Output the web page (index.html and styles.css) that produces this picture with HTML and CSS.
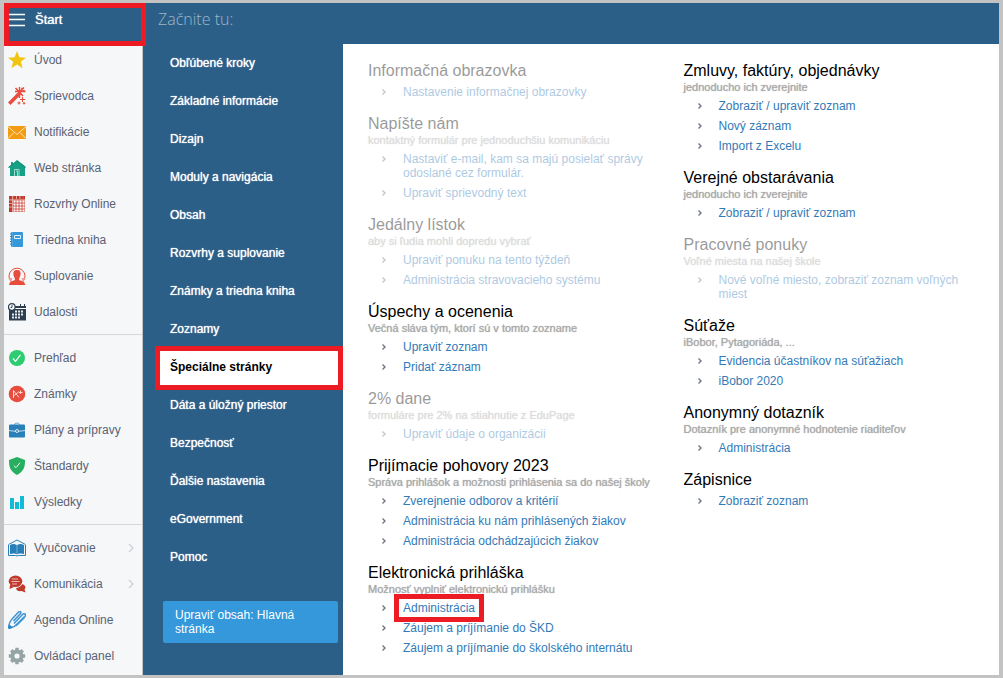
FILE: index.html
```
<!DOCTYPE html>
<html lang="sk">

<head>
	<title>EduPage</title>
	<meta charset="utf-8">
	<meta name="viewport" content="width=device-width, initial-scale=1">
	<link rel="stylesheet" href="styles.css">
</head>

<body>
	<svg class="sprite" aria-hidden="true">
		<symbol id="arrow" viewBox="0 0 6 8"><path d="M1.500 1.500L4 4 1.500 6.500" fill="none" stroke="#6d7687" stroke-width="1.400"/></symbol>
		<symbol id="more" viewBox="0 0 6 10"><path d="M1 1l4 4-4 4" fill="none" stroke="#cdd0d3" stroke-width="1.200"/></symbol>
	</svg>
	<div class="page">
		<nav class="sidebar">
			<button class="start" type="button">
				<svg class="icon" viewBox="0 0 18 18"><path d="M1 3.500h16M1 8.500h16M1 14.500h16" stroke="#fff" stroke-width="1.500"/></svg>
				<span>Štart</span>
			</button>
			<ul class="side-list">
				<li><a href="#">
					<svg class="icon" viewBox="0 0 18 18"><path d="M9 0l2.400 6.300 6.600.400-5.200 4 1.800 6.500L9 13.500l-5.600 3.700 1.800-6.500L0 6.700l6.600-.400z" fill="#f1c40f"/></svg>
					<span>Úvod</span></a></li>
				<li><a href="#">
					<svg class="icon" viewBox="0 0 18 18"><path d="M0 15.500L9.500 6l2.400 2.400L2.500 18z" fill="#e74c3c"/><path d="M11.500 0v11M7 4.500h10.500M7.500 1l7.500 8M16 .500L8 8.500M13.500 1l3 3" stroke="#e74c3c" stroke-width="1.500"/><path d="M14.500 10v5M12 12.500h5M11 14.500v3M9.500 16h3M16 15v2.500M14.800 16.300h2.500" stroke="#e74c3c"/></svg>
					<span>Sprievodca</span></a></li>
				<li><a href="#">
					<svg class="icon" viewBox="0 0 18 18"><path d="M0 3h18v13H0z" fill="#f39c12"/><path d="M0 3.500l9 8 9-8M0 15.500l6-6M18 15.500l-6-6" fill="none" stroke="#fbe3bb"/></svg>
					<span>Notifikácie</span></a></li>
				<li><a href="#">
					<svg class="icon" viewBox="0 0 18 18"><path d="M3 3h2v2L9 1l8.500 6.500-.5 1.500V17H2V9L.5 8 3 6z" fill="#16a085"/><path d="M.5 8.500L9 2l8.500 6.500" fill="none" stroke="#138b75"/><path d="M6.500 17v-6.500h4.500V17M8 12h1.500v5" fill="none" stroke="#a4d9cf"/></svg>
					<span>Web stránka</span></a></li>
				<li><a href="#">
					<svg class="icon" viewBox="0 0 18 18"><path d="M1 1h16v16H1z" fill="#cf5c53"/><path d="M5.500 5.500h2v2h-2zM8.500 5.500h2v2h-2zM11.500 5.500h2v2h-2zM14.500 5.500h2v2h-2zM5.500 8.500h2v2h-2zM8.500 8.500h2v2h-2zM11.500 8.500h2v2h-2zM14.500 8.500h2v2h-2zM5.500 11.500h2v2h-2zM8.500 11.500h2v2h-2zM11.500 11.500h2v2h-2zM14.500 11.500h2v2h-2zM5.500 14.500h2v2h-2zM8.500 14.500h2v2h-2zM11.500 14.500h2v2h-2zM14.500 14.500h2v2h-2z" fill="#fff"/><path d="M1 1h3v3H1zM5.500 1h2.500v3H5.500zM9 1h2.500v3H9zM12.500 1h2v3h-2zM15.500 1H17v3h-1.500zM1 5.500h3V8H1zM1 9h3v2.500H1zM1 12.500h3V17H1z" fill="#c0392b"/><path d="M4.500 1v16M8.500 1v3M12 1v3M1 5h16M1 8.500h3M1 12h3" stroke="#f3d0cd" stroke-width=".6"/></svg>
					<span>Rozvrhy Online</span></a></li>
				<li><a href="#">
					<svg class="icon" viewBox="0 0 18 18"><rect x="3" y="1" width="12" height="15" rx="1" fill="#3498db"/><path d="M2 3h2M2 5.500h2M2 8h2M2 10.500h2M2 13h2" stroke="#2980b9"/><path d="M6.500 4.500h6v3h-6z" fill="#3498db" stroke="#e6f2fb"/><path d="M4.500 1v15" stroke="#6db5e6" stroke-width=".5"/></svg>
					<span>Triedna kniha</span></a></li>
				<li><a href="#">
					<svg class="icon" viewBox="0 0 18 18"><path d="M3 14.500A8 8 0 1 1 15 14.500" fill="none" stroke="#e74c3c"/><path d="M.5 11l2.700 4 1.300-4zM17.500 11l-2.700 4-1.300-4z" fill="#f1a097"/><path d="M9 3c3 0 4 2 3.500 5-.4 2-1.500 3-1.500 5l5 2 1.500 3H1l1-3 5-2c0-2-1.200-3-1.500-5C5 5 6 3 9 3z" fill="#e74c3c"/></svg>
					<span>Suplovanie</span></a></li>
				<li><a href="#">
					<svg class="icon" viewBox="0 0 18 18"><path d="M1 3h17v14.500H1z" fill="#2c3e50"/><path d="M6 5.500h12" stroke="#fff"/><path d="M12.500 1v3M16.500 1v3" stroke="#2c3e50"/><circle cx="3.800" cy="4" r="3.300" fill="#fff" stroke="#2c3e50" stroke-width="1.200"/><path d="M4 2v2.500H2.500" fill="none" stroke="#2c3e50"/><path d="M7 7.500h2v2H7zM10 7.500h2v2h-2zM13 7.500h2v2h-2zM4 10.500h2v2H4zM7 10.500h2v2H7zM10 10.500h2v2h-2zM13 10.500h2v2h-2zM4 13.500h2v2H4zM7 13.500h2v2H7zM10 13.500h2v2h-2z" fill="#e8ebee"/></svg>
					<span>Udalosti</span></a></li>
			</ul>
			<ul class="side-list">
				<li><a href="#">
					<svg class="icon" viewBox="0 0 18 18"><circle cx="9" cy="9" r="8" fill="#2ecc71"/><path d="M5 9.500l2.500 2.800 5-6.500" fill="none" stroke="#fff" stroke-width="1.200"/></svg>
					<span>Prehľad</span></a></li>
				<li><a href="#">
					<svg class="icon" viewBox="0 0 18 18"><circle cx="9" cy="9" r="8.300" fill="#e74c3c"/><path d="M5.500 13V5.500L11 12.500M5.500 11L11 6.500M11 7.500h3.500M12.500 5.500v3.500" fill="none" stroke="#fbdad6"/></svg>
					<span>Známky</span></a></li>
				<li><a href="#">
					<svg class="icon" viewBox="0 0 18 18"><path d="M6.500 4q0-2 2.500-2t2.500 2" fill="none" stroke="#6ba8d1"/><rect x="1" y="3.500" width="16" height="13" rx="1" fill="#2980b9"/><path d="M1 9.500c5 1 11 1 16 0" fill="none" stroke="#eaf3f9" stroke-width=".8"/><circle cx="9" cy="10" r="1.500" fill="#2980b9" stroke="#fff" stroke-width=".8"/></svg>
					<span>Plány a prípravy</span></a></li>
				<li><a href="#">
					<svg class="icon" viewBox="0 0 18 18"><path d="M9 0l8 3c0 7-1 11-8 15C2 14 1 10 1 3z" fill="#27ae60"/><path d="M5.800 8.500l2.200 2.200 4-5" fill="none" stroke="#e9f7ef"/></svg>
					<span>Štandardy</span></a></li>
				<li><a href="#">
					<svg class="icon" viewBox="0 0 18 18"><path d="M2 5h4v11H2zM7 9h4v7H7zM12 3h4v13h-4z" fill="#13bcd6"/></svg>
					<span>Výsledky</span></a></li>
			</ul>
			<ul class="side-list">
				<li><a href="#">
					<svg class="icon" viewBox="0 0 18 18"><path d="M.5 5.500L9 1l8.500 4.500" fill="none" stroke="#2980b9"/><path d="M2 6c3-1.500 5.500-1 7 .5 1.500-1.500 4-2 7-.5v9c-3-1-5.500-.5-7 .5-1.500-1-4-1.500-7-.5z" fill="#2980b9"/><path d="M.5 6v10.500h6.800q1.700 1 3.400 0h6.800V6" fill="none" stroke="#2980b9"/><path d="M9 6.500v8.500" stroke="#9cc6e2" stroke-width=".7"/></svg>
					<span>Vyučovanie</span><svg class="more"><use href="#more"/></svg></a></li>
				<li><a href="#">
					<svg class="icon" viewBox="0 0 18 18"><path d="M13 9c4 0 5.500 3.500 3.500 5.500l1 3-4-1.500c-3 .5-5-.5-5.500-2.500z" fill="#c0392b"/><ellipse cx="7.500" cy="6.500" rx="7.500" ry="6.300" fill="#f5f7f9"/><ellipse cx="7.500" cy="6.300" rx="6.800" ry="5.800" fill="#c0392b"/><path d="M2 10l-.5 4L6 12z" fill="#c0392b"/><path d="M4 4h6M3.500 6.500h8M4 9h5" stroke="#f0c8c4" stroke-width=".9"/></svg>
					<span>Komunikácia</span><svg class="more"><use href="#more"/></svg></a></li>
				<li><a href="#">
					<svg class="icon" viewBox="0 0 18 18"><path d="M.5 17.500c0-5 1-7 4-10L10.500 1c2-1 3 0 2 1.500L5.500 10M.5 17.500c4-.5 6-1.500 9-4.500L17 5.500C18.500 3 16 2 14.500 3.500L6 12.500" fill="none" stroke="#3f93d3" stroke-width="1.500"/><path d="M8 14.500L16.500 6" stroke="#3498db" stroke-width="2"/><path d="M.5 17.500l1-4 3 3z" fill="#2980b9"/></svg>
					<span>Agenda Online</span></a></li>
				<li><a href="#">
					<svg class="icon" viewBox="0 0 18 18"><circle cx="9" cy="9" r="4.600" fill="none" stroke="#95a5a6" stroke-width="4"/><path d="M9 .8v3M9 14.200v3M.8 9h3M14.200 9h3M3.200 3.200l2 2M12.800 12.800l2 2M3.200 14.800l2-2M12.800 5.200l2-2" stroke="#95a5a6" stroke-width="3.400"/></svg>
					<span>Ovládací panel</span></a></li>
			</ul>
		</nav>

		<div class="main">
			<header class="top">Začnite tu:</header>
			<div class="columns">
				<nav class="menu">
					<ul>
						<li><a href="#">Obľúbené kroky</a></li>
						<li><a href="#">Základné informácie</a></li>
						<li><a href="#">Dizajn</a></li>
						<li><a href="#">Moduly a navigácia</a></li>
						<li><a href="#">Obsah</a></li>
						<li><a href="#">Rozvrhy a suplovanie</a></li>
						<li><a href="#">Známky a triedna kniha</a></li>
						<li><a href="#">Zoznamy</a></li>
						<li><a href="#" class="active">Špeciálne stránky</a></li>
						<li><a href="#">Dáta a úložný priestor</a></li>
						<li><a href="#">Bezpečnosť</a></li>
						<li><a href="#">Ďalšie nastavenia</a></li>
						<li><a href="#">eGovernment</a></li>
						<li><a href="#">Pomoc</a></li>
					</ul>
					<button class="edit" type="button">Upraviť obsah: Hlavná stránka</button>
				</nav>

				<main class="content">
					<div class="col">
						<section class="off">
							<h2>Informačná obrazovka</h2>
							<ul>
								<li><svg class="arrow"><use href="#arrow"/></svg><a href="#">Nastavenie informačnej obrazovky</a></li>
							</ul>
						</section>
						<section class="off">
							<h2>Napíšte nám</h2>
							<p>kontaktný formulár pre jednoduchšiu komunikáciu</p>
							<ul>
								<li><svg class="arrow"><use href="#arrow"/></svg><a href="#">Nastaviť e-mail, kam sa majú posielať správy odoslané cez formulár.</a></li>
								<li><svg class="arrow"><use href="#arrow"/></svg><a href="#">Upraviť sprievodný text</a></li>
							</ul>
						</section>
						<section class="off">
							<h2>Jedálny lístok</h2>
							<p>aby si ľudia mohli dopredu vybrať</p>
							<ul>
								<li><svg class="arrow"><use href="#arrow"/></svg><a href="#">Upraviť ponuku na tento týždeň</a></li>
								<li><svg class="arrow"><use href="#arrow"/></svg><a href="#">Administrácia stravovacieho systému</a></li>
							</ul>
						</section>
						<section>
							<h2>Úspechy a ocenenia</h2>
							<p>Večná sláva tým, ktorí sú v tomto zozname</p>
							<ul>
								<li><svg class="arrow"><use href="#arrow"/></svg><a href="#">Upraviť zoznam</a></li>
								<li><svg class="arrow"><use href="#arrow"/></svg><a href="#">Pridať záznam</a></li>
							</ul>
						</section>
						<section class="off">
							<h2>2% dane</h2>
							<p>formuláre pre 2% na stiahnutie z EduPage</p>
							<ul>
								<li><svg class="arrow"><use href="#arrow"/></svg><a href="#">Upraviť údaje o organizácii</a></li>
							</ul>
						</section>
						<section>
							<h2>Prijímacie pohovory 2023</h2>
							<p>Správa prihlášok a možnosti prihlásenia sa do našej školy</p>
							<ul>
								<li><svg class="arrow"><use href="#arrow"/></svg><a href="#">Zverejnenie odborov a kritérií</a></li>
								<li><svg class="arrow"><use href="#arrow"/></svg><a href="#">Administrácia ku nám prihlásených žiakov</a></li>
								<li><svg class="arrow"><use href="#arrow"/></svg><a href="#">Administrácia odchádzajúcich žiakov</a></li>
							</ul>
						</section>
						<section>
							<h2>Elektronická prihláška</h2>
							<p>Možnosť vyplniť elektronickú prihlášku</p>
							<ul>
								<li><svg class="arrow"><use href="#arrow"/></svg><a href="#" class="marked">Administrácia</a></li>
								<li><svg class="arrow"><use href="#arrow"/></svg><a href="#">Záujem a príjímanie do ŠKD</a></li>
								<li><svg class="arrow"><use href="#arrow"/></svg><a href="#">Záujem a príjímanie do školského internátu</a></li>
							</ul>
						</section>
					</div>
					<div class="col">
						<section>
							<h2>Zmluvy, faktúry, objednávky</h2>
							<p>jednoducho ich zverejnite</p>
							<ul>
								<li><svg class="arrow"><use href="#arrow"/></svg><a href="#">Zobraziť / upraviť zoznam</a></li>
								<li><svg class="arrow"><use href="#arrow"/></svg><a href="#">Nový záznam</a></li>
								<li><svg class="arrow"><use href="#arrow"/></svg><a href="#">Import z Excelu</a></li>
							</ul>
						</section>
						<section>
							<h2>Verejné obstarávania</h2>
							<p>jednoducho ich zverejnite</p>
							<ul>
								<li><svg class="arrow"><use href="#arrow"/></svg><a href="#">Zobraziť / upraviť zoznam</a></li>
							</ul>
						</section>
						<section class="off">
							<h2>Pracovné ponuky</h2>
							<p>Voľné miesta na našej škole</p>
							<ul>
								<li><svg class="arrow"><use href="#arrow"/></svg><a href="#">Nové voľné miesto, zobraziť zoznam voľných miest</a></li>
							</ul>
						</section>
						<section>
							<h2>Súťaže</h2>
							<p>iBobor, Pytagoriáda, ...</p>
							<ul>
								<li><svg class="arrow"><use href="#arrow"/></svg><a href="#">Evidencia účastníkov na súťažiach</a></li>
								<li><svg class="arrow"><use href="#arrow"/></svg><a href="#">iBobor 2020</a></li>
							</ul>
						</section>
						<section>
							<h2>Anonymný dotazník</h2>
							<p>Dotazník pre anonymné hodnotenie riaditeľov</p>
							<ul>
								<li><svg class="arrow"><use href="#arrow"/></svg><a href="#">Administrácia</a></li>
							</ul>
						</section>
						<section>
							<h2>Zápisnice</h2>
							<ul>
								<li><svg class="arrow"><use href="#arrow"/></svg><a href="#">Zobraziť zoznam</a></li>
							</ul>
						</section>
					</div>
				</main>
			</div>
		</div>
	</div>
</body>

</html>
```
FILE: styles.css
```
* {
	margin: 0;
	padding: 0;
	box-sizing: border-box;
}

body {
	font-family: "Liberation Sans", Arial, sans-serif;
	font-size: 12px;
	line-height: 14px;
	background-color: #c3c3c3;
}

ul {
	list-style: none;
}

a {
	text-decoration: none;
}

button {
	border: 0;
	font: inherit;
	color: #fff;
	text-align: left;
	cursor: pointer;
}

.sprite {
	display: none;
}

.page {
	display: flex;
	min-height: 100vh;
	border: 3px solid #c3c3c3;
	border-width: 3px 4px;
}

/* left bar */
.sidebar {
	width: 139px;
	flex-shrink: 0;
	background-color: #f5f7f9;
	border-right: 1px solid #c3c6c9;
}

.start {
	position: relative;
	display: flex;
	gap: 9px;
	width: 100%;
	height: 39px;
	padding: 8px 4px;
	line-height: 18px;
	background-color: #2c5f87;
}

.start span {
	font-size: 13px;
	text-shadow: 0 0 1px #fff;
}

/* red frames around the steps to click */
.start::after,
.active::after,
.marked::after {
	content: "";
	position: absolute;
	border: 5px solid #ed1c24;
}

.start::after {
	inset: 0 -4px -4px 0;
}

.side-list + .side-list {
	margin-top: 4px;
	padding-top: 5px;
	border-top: 1px solid #d5d8da;
}

.side-list a {
	display: flex;
	align-items: center;
	gap: 8px;
	height: 36px;
	padding: 0 8px 0 4px;
	color: #5a6274;
}

.icon {
	width: 18px;
	height: 18px;
	flex-shrink: 0;
}

.more {
	width: 6px;
	height: 10px;
	margin-left: auto;
}

/* blue part */
.main {
	flex: 1;
	display: flex;
	flex-direction: column;
	background-color: #2c5f87;
}

.top {
	height: 41px;
	padding: 6px 15px;
	font-family: "Open Sans", sans-serif;
	font-size: 16px;
	font-weight: 300;
	line-height: 20px;
	color: #9db6ca;
}

.columns {
	flex: 1;
	display: flex;
}

.menu {
	width: 200px;
	flex-shrink: 0;
}

.menu a {
	position: relative;
	display: block;
	margin-left: 13px;
	padding: 12px 14px;
	color: #fff;
	text-shadow: 0 0 1px #fff;
}

.menu .active {
	background-color: #fff;
	font-weight: bold;
	color: #000;
	text-shadow: none;
}

.active::after {
	inset: -2px 0 -4px -1px;
}

.edit {
	display: block;
	width: 175px;
	margin: 25px 0 0 20px;
	padding: 7px 12px;
	border-radius: 2px;
	background-color: #3498db;
}

.content {
	flex: 1;
	display: grid;
	grid-template-columns: 1fr 1fr;
	padding: 16px 0 5px 25px;
	background-color: #fff;
}

.col {
	padding-right: 20px;
}

.col section {
	margin-bottom: 11px;
}

.col section:last-child {
	margin-bottom: 0;
}

.off {
	opacity: 0.4;
}

.col h2 {
	padding-top: 1px;
	font-size: 16px;
	font-weight: normal;
	line-height: 20px;
	color: #000;
}

.col p {
	margin-bottom: 1px;
	font-size: 11px;
	line-height: 13px;
	color: #aaa;
	text-shadow: 0 0 1px #aaa;
}

.col ul {
	padding-top: 1px;
}

.col li {
	display: flex;
	align-items: flex-start;
	gap: 16px;
	padding: 3px 0 3px 13px;
}

.col a {
	position: relative;
	color: #337ab7;
}

.arrow {
	width: 6px;
	height: 8px;
	margin-top: 3px;
	flex-shrink: 0;
}

.marked::after {
	inset: -7px -9px;
}
```
